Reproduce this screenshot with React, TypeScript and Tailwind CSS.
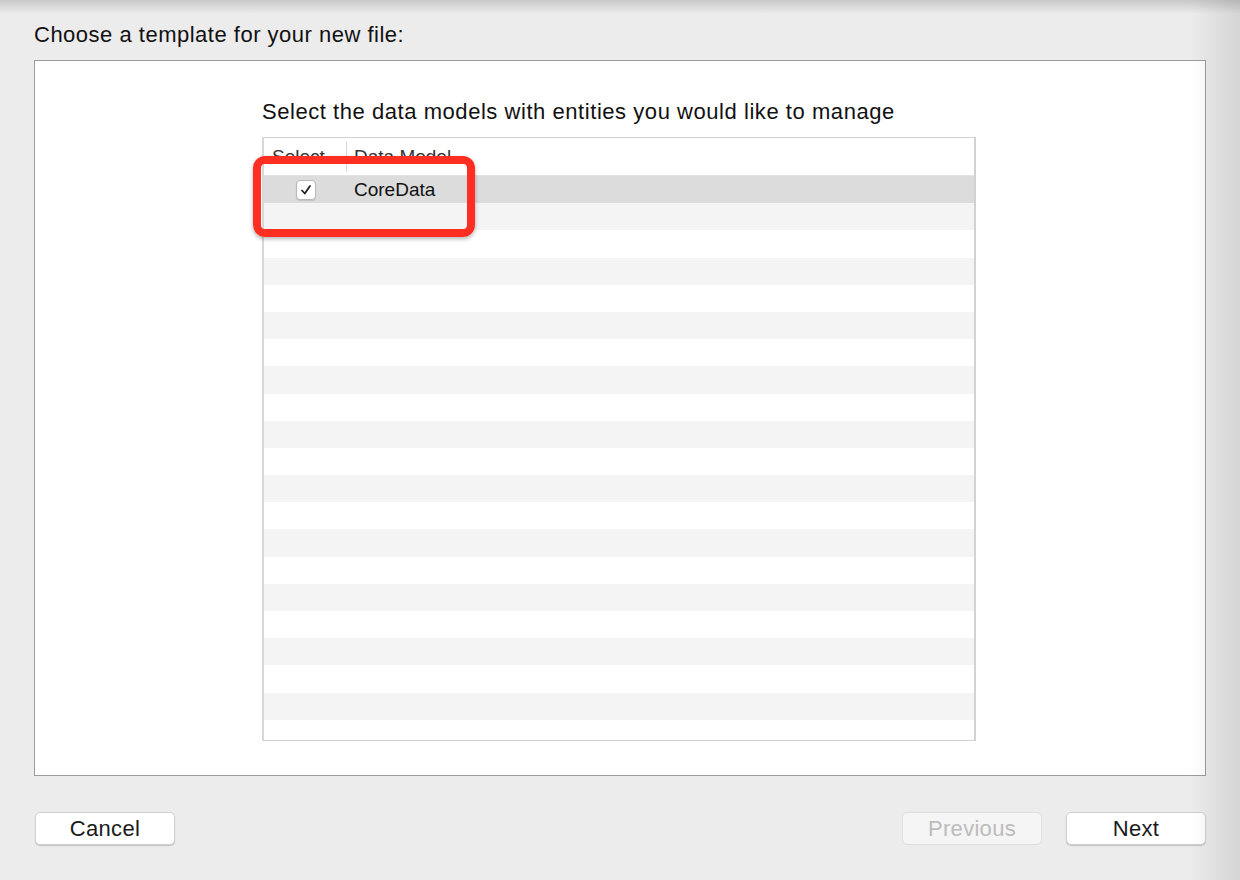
import React from 'react';

const ROWS = Array.from({ length: 21 }, (_, i) => i);

function MacButton({ label, disabled }: { label: string; disabled?: boolean }) {
  return (
    <button
      className={
        disabled
          ? 'w-[140px] h-[33px] rounded-[5px] bg-[#f5f5f5] border border-[#dedede] text-[22px] leading-[30px] tracking-[0.3px] text-[#bcbcbc]'
          : 'w-[140px] h-[33px] rounded-[5px] bg-white border border-[#d0d0d0] shadow-[0_1px_1px_rgba(0,0,0,0.18)] text-[22px] leading-[30px] tracking-[0.3px] text-[#1a1a1a]'
      }
    >
      {label}
    </button>
  );
}

export default function App() {
  return (
    <div
      className="relative w-[1240px] h-[880px] overflow-hidden bg-[#ececec] text-black"
      style={{ fontFamily: '"Helvetica Neue", "Liberation Sans", Arial, sans-serif' }}
    >
      <div className="px-[34px] pt-[23px]">
        <h1 className="h-[24px] text-[22px] leading-[24px] tracking-[0.5px] text-[#111]">Choose a template for your new file:</h1>

        {/* template panel */}
        <div className="mt-[13px] h-[716px] w-[1172px] border border-[#9c9c9c] bg-white pl-[227px]">
          <p className="pt-[39px] text-[22px] leading-[24px] tracking-[0.55px] text-[#111]">
            Select the data models with entities you would like to manage
          </p>

          <div className="relative mt-[13px] w-[714px] h-[604px] border-x-2 border-y border-[#d2d2d2] border-l-[#d8d8d8]">
            <div className="h-full overflow-hidden">
              {/* header */}
              <div className="flex h-[38px] items-center border-b border-[#e2e2e2] text-[19px] text-[#333]">
                <div className="w-[83px] border-r border-[#d8d8d8] pl-[8px] leading-[30px]">Select</div>
                <div className="pl-[7px] leading-[30px]">Data Model</div>
              </div>

              {ROWS.map((i) => (
                <div
                  key={i}
                  className={
                    i === 0
                      ? 'flex h-[27.2px] items-center bg-[#dcdcdc]'
                      : i % 2 === 1
                      ? 'h-[27.2px] bg-[#f4f4f4]'
                      : 'h-[27.2px] bg-white'
                  }
                >
                  {i === 0 && (
                    <>
                      <div className="flex w-[83px] justify-center">
                        <span className="flex h-[20px] w-[20px] items-center justify-center rounded-[4px] border border-[#b9b9b9] bg-white shadow-[0_1px_1px_rgba(0,0,0,0.12)]">
                          <svg width="12" height="12" viewBox="0 0 12 12">
                            <path d="M2 6.5 L4.8 9.5 L10 2" fill="none" stroke="#222" strokeWidth="1.8" strokeLinecap="round" strokeLinejoin="round" />
                          </svg>
                        </span>
                      </div>
                      <span className="pl-[7px] text-[19px] leading-[27px] text-[#111]">CoreData</span>
                    </>
                  )}
                </div>
              ))}
            </div>

            {/* red highlight annotation */}
            <div className="pointer-events-none absolute left-[-11px] top-[18px] h-[81px] w-[222px] rounded-[12px] border-[8px] border-[#fe2f22] shadow-[0_2px_4px_rgba(0,0,0,0.3)]" />
          </div>
        </div>

        <div className="mt-[36px] flex items-center pl-px">
          <MacButton label="Cancel" />
          <div className="ml-auto flex gap-[24px]">
            <MacButton label="Previous" disabled />
            <MacButton label="Next" />
          </div>
        </div>
      </div>

      {/* window edge shading */}
      <div className="pointer-events-none absolute inset-x-0 top-0 h-[14px] bg-gradient-to-b from-black/15 to-transparent" />
      <div className="pointer-events-none absolute inset-y-0 right-0 w-[50px] bg-gradient-to-r from-transparent to-black/10" />
    </div>
  );
}
